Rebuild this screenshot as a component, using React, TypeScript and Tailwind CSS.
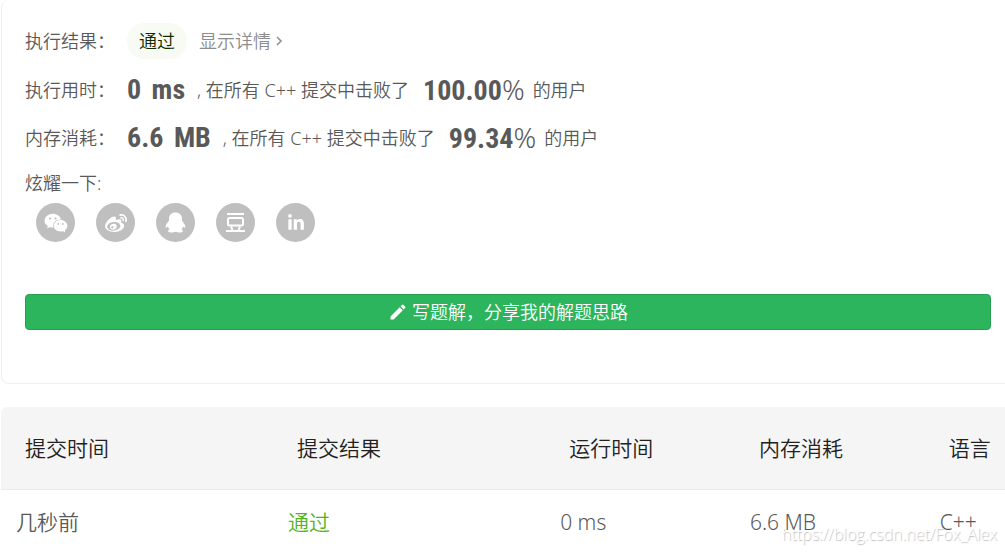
import React from 'react';
import { AiFillWechat, AiOutlineWeibo } from 'react-icons/ai';
import { FaLinkedinIn } from 'react-icons/fa';
import { MdEdit } from 'react-icons/md';

const QqIcon: React.FC = () => (
    <svg viewBox="0 0 22 22" className="h-[22px] w-[22px]" fill="currentColor" aria-hidden="true">
        <path d="M10.500 0.500C6.500 0.500 4 3.200 4 6.700L4 8.800C2.500 10.500 0.500 12.900 0.600 15.100C0.700 16 1.700 15.700 2.900 14.400C3.200 15.700 3.800 16.700 4.600 17.500C3.600 17.900 2.900 18.500 3.200 19.500C3.700 20.800 8.500 20.800 10.500 19.800C12.500 20.800 17.300 20.800 17.800 19.500C18.100 18.500 17.400 17.900 16.400 17.500C17.200 16.700 17.800 15.700 18.100 14.400C19.300 15.700 20.300 16 20.400 15.100C20.500 12.900 18.500 10.500 17 8.800L17 6.700C17 3.200 14.500 0.500 10.500 0.500Z" />
    </svg>
);

const DoubanIcon: React.FC = () => (
    <svg viewBox="0 0 22 22" className="h-[22px] w-[22px]" fill="none" stroke="currentColor" strokeWidth="2" aria-hidden="true">
        <path d="M2 2H19M1 19H20M6 14.500L7.500 18M15 14.500L13.500 18" />
        <rect x="3" y="6" width="15" height="7.500" rx="1.500" />
    </svg>
);

const shares = [
    { name: '微信', icon: <AiFillWechat className="h-[26px] w-[26px]" /> },
    { name: '微博', icon: <AiOutlineWeibo className="h-[26px] w-[26px]" /> },
    { name: 'QQ', icon: <QqIcon /> },
    { name: '豆瓣', icon: <DoubanIcon /> },
    { name: 'LinkedIn', icon: <FaLinkedinIn className="h-[18px] w-[18px]" /> },
];

const stats = [
    { label: '执行用时：', amount: '0', unit: 'ms', percent: '100.00' },
    { label: '内存消耗：', amount: '6.6', unit: 'MB', percent: '99.34' },
];

const columns = [
    { title: '提交时间', width: 'w-[27.1%]' },
    { title: '提交结果', width: 'w-[27.1%]' },
    { title: '运行时间', width: 'w-[18.9%]' },
    { title: '内存消耗', width: 'w-[18.9%]' },
    { title: '语言', width: '' },
];

interface StatProps {
    label: string;
    amount: string;
    unit: string;
    percent: string;
}

const Stat: React.FC<StatProps> = ({ label, amount, unit, percent }) => (
    <div className="flex h-12 items-center whitespace-nowrap">
        <span className="w-[102px]">{label}</span>
        <strong className="font-['Roboto_Condensed',Roboto,sans-serif] text-[28px] leading-9 font-bold">
            {amount} <span className="ml-1">{unit}</span>
        </strong>
        <span className="ml-3">, 在所有 C++ 提交中击败了</span>
        <span className="ml-3.5 text-[28px] leading-9">
            <strong className="font-['Roboto_Condensed',Roboto,sans-serif] font-bold">{percent}</strong>%
        </span>
        <span className="ml-2">的用户</span>
    </div>
);

const ResultCard: React.FC = () => (
    <section className="rounded-l-lg border-b border-l border-[#eeeeee] pt-[23px] pr-3.5 pb-[53px] pl-[23px] text-lg">
        <div className="flex h-9 items-center">
            <span className="w-[102px]">执行结果：</span>
            <span className="rounded-full bg-[#f7fbf3] px-3 leading-9 text-[#0f2b00]">通过</span>
            <a href="#detail" className="ml-3 flex items-center text-[#8c8c8c]">
                显示详情
                <svg viewBox="0 0 8 12" className="ml-1 h-3 w-2" fill="none" stroke="currentColor" strokeWidth="1.500" aria-hidden="true">
                    <path d="M2 2L6 6L2 10" />
                </svg>
            </a>
        </div>
        <div className="mt-[7px]">
            {stats.map((stat) => (
                <Stat key={stat.label} {...stat} />
            ))}
        </div>
        <p className="mt-[9px] leading-6">炫耀一下:</p>
        <div className="mt-2 ml-[11px] flex gap-[21px]">
            {shares.map((share) => (
                <button
                    key={share.name}
                    type="button"
                    aria-label={share.name}
                    className="flex h-[39px] w-[39px] items-center justify-center rounded-full bg-[#bfbfbf] text-white"
                >
                    {share.icon}
                </button>
            ))}
        </div>
        <button
            type="button"
            className="mt-[52px] flex h-9 w-full items-center justify-center gap-1 rounded border border-[#279e50] bg-[#2db55d] text-white"
        >
            <MdEdit className="h-5 w-5" />
            写题解，分享我的解题思路
        </button>
    </section>
);

const SubmissionTable: React.FC = () => (
    <table className="mt-[23px] w-full table-fixed text-left text-[21px] whitespace-nowrap">
        <thead>
            <tr>
                {columns.map((column) => (
                    <th
                        key={column.title}
                        className={`h-[82px] border-b border-[#eaeaea] bg-[#f5f5f5] pt-0.5 pl-6 font-[350] text-[#212121] first:rounded-tl-md ${column.width}`}
                    >
                        {column.title}
                    </th>
                ))}
            </tr>
        </thead>
        <tbody>
            <tr>
                <td className="h-[64px] pt-[3px] pl-[15px]">几秒前</td>
                <td className="pt-[3px] pl-[15px]">
                    <a href="#submission" className="text-[#52b51d]">通过</a>
                </td>
                <td className="pt-[3px] pl-[15px]">0 ms</td>
                <td className="pt-[3px] pl-[15px]">6.6 MB</td>
                <td className="pt-[3px] pl-[15px]">C++</td>
            </tr>
        </tbody>
    </table>
);

const App: React.FC = () => (
    <main className="relative bg-white pl-px font-['Noto_Sans','Noto_Sans_CJK_SC',sans-serif] font-[350] text-[#595959]">
        <ResultCard />
        <SubmissionTable />
        <span className="absolute right-2 bottom-[7px] font-['Open_Sans',sans-serif] text-base font-light text-white [text-shadow:1px_1px_1px_#b5b5b5]">
            https://blog.csdn.net/Fox_Alex
        </span>
    </main>
);

export default App;
